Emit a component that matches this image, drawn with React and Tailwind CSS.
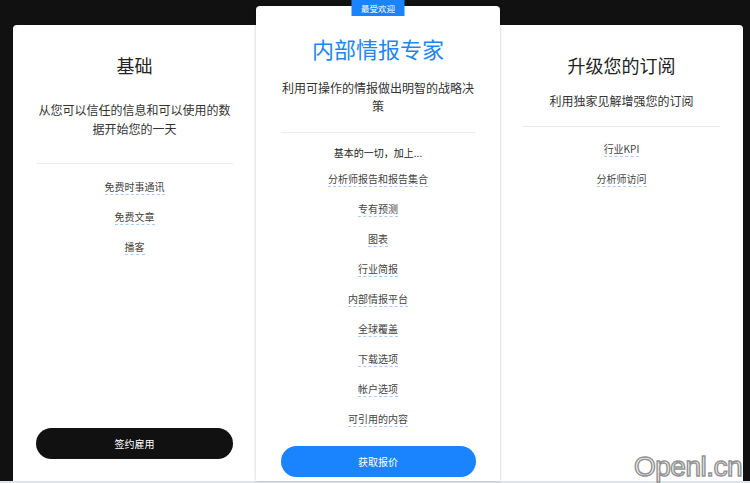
import React from "react";

const font = { fontFamily: '"Noto Sans CJK SC", "Noto Sans", sans-serif' };

function Item({ children }) {
  return (
    <div className="h-[30px] flex items-center justify-center">
      <span className="text-[10px] leading-[13px] text-[#444] border-b border-dashed border-[#a9ccf3] pb-[1px]">
        {children}
      </span>
    </div>
  );
}

export default function App() {
  return (
    <div className="w-[750px] h-[483px] bg-[#111111] overflow-hidden relative flex flex-col" style={font}>
      <div className="h-[481px] flex pl-[13px] pt-[6px]">
        {/* Left card */}
        <div className="mt-[19px] w-[243px] h-[456px] bg-white rounded-tl-[4px] flex flex-col items-center">
          <div className="pt-[28px] text-[18px] leading-[24px] text-[#222]">基础</div>
          <div className="mt-[23px] px-5 text-center text-[12px] leading-[19px] text-[#333]">
            从您可以信任的信息和可以使用的数据开始您的一天
          </div>
          <div className="mt-[25px] w-[197px] h-px bg-[#ececec]" />
          <div className="mt-[8px] flex flex-col">
            <Item>免费时事通讯</Item>
            <Item>免费文章</Item>
            <Item>播客</Item>
          </div>
          <div className="flex-1" />
          <div className="mb-[22px] w-[197px] h-[31px] rounded-full bg-[#111] text-white text-[10px] flex items-center justify-center">
            签约雇用
          </div>
        </div>

        {/* Middle card */}
        <div className="relative z-10 w-[244px] h-[475px] bg-white rounded-t-[4px] shadow-[0_0_3px_rgba(0,0,0,0.25)] flex flex-col items-center">
          <div className="absolute -top-[6px] left-1/2 -translate-x-1/2 w-[53px] h-[16px] bg-[#1a84ff] text-white text-[8.5px] flex items-center justify-center">
            最受欢迎
          </div>
          <div className="pt-[28px] text-[22px] leading-[28px] text-[#1f86f0]">内部情报专家</div>
          <div className="mt-[17px] px-[22px] text-center text-[12px] leading-[18px] text-[#333]">
            利用可操作的情报做出明智的战略决策
          </div>
          <div className="mt-[17px] w-[195px] h-px bg-[#ececec]" />
          <div className="mt-[13px] text-[10px] leading-[14px] text-[#222]">基本的一切，加上...</div>
          <div className="mt-[4px] flex flex-col">
            <Item>分析师报告和报告集合</Item>
            <Item>专有预测</Item>
            <Item>图表</Item>
            <Item>行业简报</Item>
            <Item>内部情报平台</Item>
            <Item>全球覆盖</Item>
            <Item>下载选项</Item>
            <Item>帐户选项</Item>
            <Item>可引用的内容</Item>
          </div>
          <div className="flex-1" />
          <div className="mb-[4px] w-[195px] h-[31px] rounded-full bg-[#1a84ff] text-white text-[10px] flex items-center justify-center">
            获取报价
          </div>
        </div>

        {/* Right card */}
        <div className="mt-[19px] w-[243px] h-[456px] bg-white rounded-tr-[4px] flex flex-col items-center">
          <div className="pt-[28px] text-[18px] leading-[24px] text-[#222]">升级您的订阅</div>
          <div className="mt-[14px] px-5 text-center text-[12px] leading-[19px] text-[#333]">
            利用独家见解增强您的订阅
          </div>
          <div className="mt-[16px] w-[197px] h-px bg-[#ececec]" />
          <div className="mt-[7px] flex flex-col">
            <Item>行业KPI</Item>
            <Item>分析师访问</Item>
          </div>
        </div>
      </div>
      <div className="h-[2px] bg-[#dfe4ea]" />
      <div
        className="absolute left-[634px] top-[453px] text-[28px] leading-[28px] tracking-[-0.5px] text-white [-webkit-text-stroke:1.5px_#959595]"
        style={{ fontFamily: '"Liberation Sans", Arial, sans-serif' }}
      >
        Openl.cn
      </div>
    </div>
  );
}
